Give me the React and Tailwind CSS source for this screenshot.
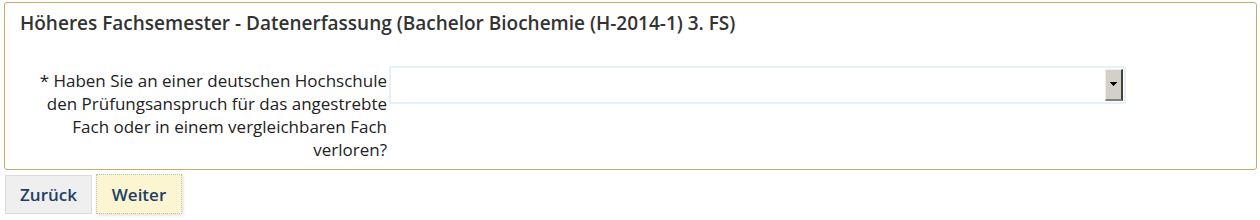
import React from 'react';

export default function App() {
  return (
    <div className="w-[1260px] h-[220px] bg-white pt-[2px] pl-[4px] pr-[3px]" style={{ fontFamily: '"Open Sans", sans-serif' }}>
      <div className="border border-[#c8aa6e] rounded-[3px] h-[168px]">
        <h2 className="pl-[15px] pt-[7px] text-[19px] font-semibold text-[#333] leading-[26px]">
          Höheres Fachsemester - Datenerfassung (Bachelor Biochemie (H-2014-1) 3. FS)
        </h2>
        <div className="flex mt-[30px]">
          <label className="w-[384px] text-right text-[17px] leading-[23px] text-[#222] pl-[32px] pr-[2px] pt-[3px]">
            * Haben Sie an einer deutschen Hochschule den Prüfungsanspruch für das angestrebte Fach oder in einem vergleichbaren Fach verloren?
          </label>
          <div className="w-[737px] h-[38px] border-2 border-[#e6f0f9] bg-white flex justify-end items-stretch">
            <div className="w-[18px] my-[1px] mr-[1px] bg-[#d4d0c8] border-t border-l border-t-[#f0eee8] border-l-[#f0eee8] border-r-2 border-b-2 border-r-[#404040] border-b-[#808080] flex items-center justify-center">
              <svg width="7" height="5" viewBox="0 0 7 5"><path d="M0 0h7v1H6v1H5v1H4v1H3V3H2V2H1V1H0z" fill="#000" /></svg>
            </div>
          </div>
        </div>
      </div>
      <div className="flex gap-[4px] mt-[5px] ml-[1px]">
        <button className="w-[87px] h-[39px] bg-[#efefef] border border-[#dcdcdc] text-[17px] font-semibold text-[#1d3f66]">
          Zurück
        </button>
        <button className="w-[86px] h-[40px] -mt-[1px] pt-[1px] bg-[#fcf5d2] border border-dotted border-[#c9c29a] shadow-[1px_1px_3px_rgba(0,0,0,0.15)] text-[17px] font-semibold text-[#1d3f66]">
          Weiter
        </button>
      </div>
    </div>
  );
}
